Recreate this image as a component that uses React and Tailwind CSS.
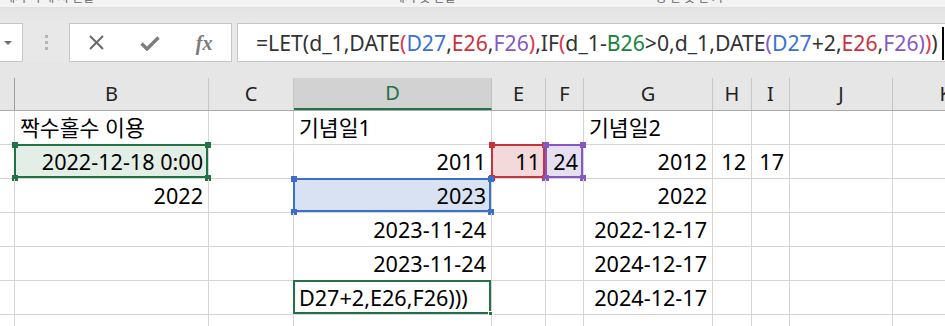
import React from "react";

const FONT = { fontFamily: '"Noto Sans", "Noto Sans CJK KR", sans-serif' };

const cols = [
  { k: "A", w: 15 },
  { k: "B", w: 194 },
  { k: "C", w: 85 },
  { k: "D", w: 198 },
  { k: "E", w: 54 },
  { k: "F", w: 38 },
  { k: "G", w: 129 },
  { k: "H", w: 39 },
  { k: "I", w: 38 },
  { k: "J", w: 103 },
  { k: "K", w: 60 },
];

function Handle({ className, color }) {
  return <div className={"absolute w-[6px] h-[6px] " + className} style={{ background: color }} />;
}

function Box({ color, fill, handles = true, editHandle = false }) {
  return (
    <div className="absolute -left-[1px] -top-[1px] -right-[0px] -bottom-[0px] pointer-events-none">
      <div
        className="absolute inset-0 border-2"
        style={{ borderColor: color, background: fill }}
      />
      {handles && (
        <>
          <Handle color={color} className="-left-[2px] -top-[2px]" />
          <Handle color={color} className="-right-[3px] -top-[2px]" />
          <Handle color={color} className="-left-[2px] -bottom-[3px]" />
          <Handle color={color} className="-right-[3px] -bottom-[3px]" />
        </>
      )}
      {editHandle && (
        <div className="absolute -right-[2px] -bottom-[2px] w-[5px] h-[5px] bg-[#217346] border border-white" />
      )}
    </div>
  );
}

const rows = [
  { B: { t: "짝수홀수 이용", a: "l" }, D: { t: "기념일1", a: "l" }, G: { t: "기념일2", a: "l" } },
  {
    B: { t: "2022-12-18 0:00", a: "r", box: { color: "#217346", fill: "#e3efe6" } },
    D: { t: "2011", a: "r" },
    E: { t: "11", a: "r", box: { color: "#c4343d", fill: "#f4d9da" } },
    F: { t: "24", a: "r", box: { color: "#8457c1", fill: "#e6dff2" } },
    G: { t: "2012", a: "r" },
    H: { t: "12", a: "r" },
    I: { t: "17", a: "r" },
  },
  {
    B: { t: "2022", a: "r" },
    D: { t: "2023", a: "r", box: { color: "#3b6fc8", fill: "#d9e2f3" } },
    G: { t: "2022", a: "r" },
  },
  { D: { t: "2023-11-24", a: "r" }, G: { t: "2022-12-17", a: "r" } },
  { D: { t: "2023-11-24", a: "r" }, G: { t: "2024-12-17", a: "r" } },
  {
    D: { t: "D27+2,E26,F26)))", a: "l", box: { color: "#217346", fill: "transparent", edit: true } },
    G: { t: "2024-12-17", a: "r" },
  },
  {},
];

function Cell({ w, data }) {
  return (
    <div
      className="relative shrink-0 h-full border-r border-[#d4d4d4]"
      style={{ width: w }}
    >
      {data && data.box && (
        <Box
          color={data.box.color}
          fill={data.box.fill}
          handles={!data.box.edit}
          editHandle={data.box.edit}
        />
      )}
      {data && (
        <div
          className={
            "relative h-full flex items-center text-[21.6px] leading-none text-black whitespace-nowrap overflow-visible " +
            (data.a === "r" ? "justify-end pr-[5px]" : "justify-start pl-[5px]")
          }
        >
          {data.t}
        </div>
      )}
    </div>
  );
}

const S = ({ c, children }) => <span style={{ color: c }}>{children}</span>;

export default function App() {
  const blue = "#3b70d4";
  const red = "#cf2f3c";
  const purple = "#8558c6";
  const green = "#17843a";
  const pink = "#e0344f";
  return (
    <div className="w-[945px] h-[326px] overflow-hidden bg-white relative" style={FONT}>
      {/* ribbon remnant */}
      <div className="h-[8px] bg-[#f3f3f3] overflow-hidden relative border-b border-[#e0e0e0]">
        <div className="flex text-[12px] text-[#666] leading-none -mt-[8px] whitespace-nowrap">
          <span className="ml-[4px]">세서 여 대 셔 연결</span>
          <span className="ml-[300px]">세서 및 연결</span>
          <span className="ml-[200px]">링 연 및 연 커</span>
        </div>
      </div>
      <div className="h-[15px] bg-gradient-to-b from-[#e3e3e3] to-[#e8e8e8]" />
      {/* formula bar */}
      <div className="h-[39px] bg-[#e8e8e8] flex">
        <div className="w-[23px] h-full bg-white border border-l-0 border-[#c6c6c6] flex items-center justify-start pl-[4px]">
          <div className="w-0 h-0 border-l-[4px] border-r-[4px] border-t-[4px] border-l-transparent border-r-transparent border-t-[#707070]" />
        </div>
        <div className="w-[46px] flex flex-col items-center justify-center gap-[3px]">
          <div className="w-[3px] h-[3px] bg-[#b4b4b4]" />
          <div className="w-[3px] h-[3px] bg-[#b4b4b4]" />
          <div className="w-[3px] h-[3px] bg-[#b4b4b4]" />
        </div>
        <div className="w-[163px] h-full bg-white border border-[#c6c6c6] flex items-center">
          <div className="w-[52px] flex justify-center ml-[1px]">
            <svg width="17" height="17" viewBox="0 0 17 17">
              <path d="M2 2 L15 15 M15 2 L2 15" stroke="#6a6a6a" strokeWidth="2" fill="none" />
            </svg>
          </div>
          <div className="w-[55px] flex justify-center">
            <svg width="20" height="16" viewBox="0 0 20 16">
              <path d="M1.5 8.5 L7 14 L18.5 2.5" stroke="#7d7d7d" strokeWidth="3.4" fill="none" />
            </svg>
          </div>
          <div className="w-[54px] flex justify-center">
            <span
              className="text-[20px] italic text-[#7a7a7a] leading-none"
              style={{ fontFamily: '"Liberation Serif", "DejaVu Serif", serif', fontWeight: 700 }}
            >
              fx
            </span>
          </div>
        </div>
        <div className="w-[5px]" />
        <div className="flex-1 h-full bg-white border border-r-0 border-[#c6c6c6] flex items-center pl-[18px] relative">
          <div className="text-[21.2px] text-[#333] whitespace-nowrap leading-none">
            =LET(d_1,DATE<S c={pink}>(</S>
            <S c={blue}>D27</S>,<S c={red}>E26</S>,<S c={purple}>F26</S>
            <S c={pink}>)</S>,IF<S c={pink}>(</S>d_1-<S c={green}>B26</S>&gt;0,d_1,DATE
            <S c={purple}>(</S>
            <S c={blue}>D27</S>+2,<S c={red}>E26</S>,<S c={purple}>F26</S>
            <S c={purple}>)</S>
            <S c={pink}>)</S>)
          </div>
          <div className="absolute left-[704px] top-[3px] w-[1.5px] h-[33px] bg-black" />
        </div>
      </div>
      <div className="h-[16px] bg-[#e6e6e6]" />
      {/* column headers */}
      <div className="h-[33px] flex bg-[#e6e6e6] border-b border-[#ababab]">
        {cols.map((c) => (
          <div
            key={c.k}
            className={
              "shrink-0 h-full flex items-center justify-center text-[20px] leading-none " +
              (c.k === "D"
                ? "bg-[#d2d2d2] text-[#217346] border-b-2 border-[#217346] border-r border-r-[#c0c0c0]"
                : "text-[#222] border-r border-[#c6c6c6]") +
              (c.k === "A" ? " border-r-[#9d9d9d]" : "") +
              (c.k === "K" ? " justify-end -mr-[10px] text-[#7a2a2a]" : "")
            }
            style={{ width: c.w }}
          >
            {c.k === "A" ? "" : c.k}
          </div>
        ))}
      </div>
      {/* rows */}
      {rows.map((r, ri) => (
        <div key={ri} className="h-[34px] flex border-b border-[#d4d4d4]">
          {cols.map((c) => (
            <Cell key={c.k} w={c.w} data={r[c.k]} />
          ))}
        </div>
      ))}
    </div>
  );
}
